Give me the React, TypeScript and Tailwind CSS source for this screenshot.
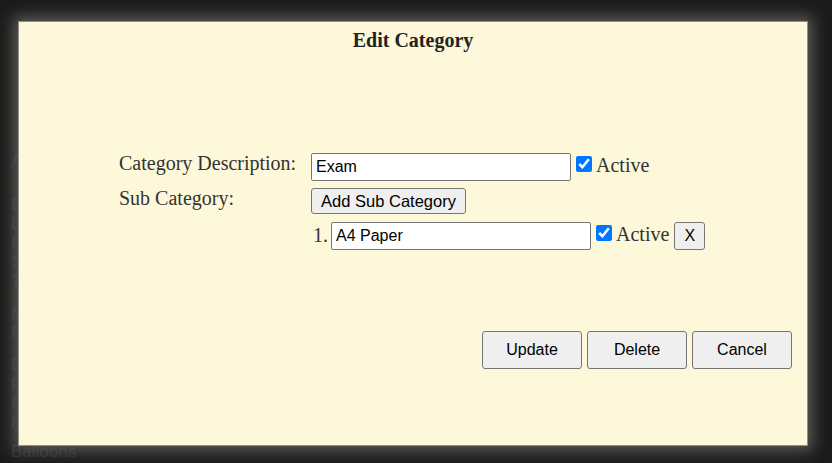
import React from "react";

const bgLines: { t: string; mt: string }[] = [
  { t: "Art Supplies", mt: "mt-0" },
  { t: "Books", mt: "mt-[24px]" },
  { t: "Drawing", mt: "mt-0" },
  { t: "Files", mt: "mt-0" },
  { t: "Stationery", mt: "mt-0" },
  { t: "Toys", mt: "mt-[1px]" },
  { t: "Markers", mt: "mt-[13px]" },
  { t: "Folders", mt: "mt-0" },
  { t: "Decorations", mt: "mt-[13px]" },
  { t: "Flags", mt: "mt-[1px]" },
  { t: "Frames", mt: "mt-0" },
  { t: "Hats", mt: "mt-0" },
  { t: "Balloons", mt: "mt-[10px]" },
];

const serif = "font-['Liberation_Serif','Times_New_Roman',serif]";
const btn = "bg-[#efefef] border border-[#767676] rounded-[3px] text-black";
const input =
  "w-[260px] h-[28px] bg-white border border-[#767676] rounded-[2px] px-[4px] text-[16px] text-black outline-none";
const check = "m-0 ml-[5px] mt-[3px] w-[16px] h-[16px] accent-[#0075ff]";
const text20 = `${serif} text-[20px] leading-[21px] text-[#333]`;

export default function App() {
  return (
    <div className="relative w-[832px] h-[463px] overflow-hidden bg-[#1b1b1a] font-['Liberation_Sans',Arial,sans-serif]">
      {/* background page content (behind the overlay) */}
      <div className="flex flex-col pl-[11px] pt-[152px] text-[17px] text-[#2f2f2e]">
        {bgLines.map((l, i) => (
          <div key={i} className={`h-[19px] leading-[19px] ${l.mt}`}>
            {l.t}
          </div>
        ))}
      </div>

      {/* modal */}
      <div className="absolute left-[18px] top-[21px] w-[790px] h-[425px] border border-[#8f8f8a] bg-[#fcf8d9] shadow-[0_0_14px_5px_rgba(110,110,108,0.75)] flex flex-col">
        <div className={`pt-[7px] text-center text-[20px] leading-[23px] font-bold text-[#222] ${serif}`}>
          Edit Category
        </div>

        <div className="mt-[101px] pl-[100px] flex flex-col">
          {/* row 1 */}
          <div className="flex items-start">
            <div className={`w-[192px] ${text20}`}>Category Description:</div>
            <input defaultValue="Exam" className={input} />
            <input type="checkbox" defaultChecked className={check} />
            <span className={`ml-[4px] mt-[2px] ${text20}`}>Active</span>
          </div>

          {/* row 2 */}
          <div className="flex items-start mt-[7px]">
            <div className={`w-[192px] ${text20}`}>Sub Category:</div>
            <button className={`w-[155px] h-[26px] text-[16.5px] ${btn}`}>Add Sub Category</button>
          </div>

          {/* row 3 */}
          <div className="flex items-start mt-[8px] pl-[192px]">
            <span className={`ml-[2px] mt-[3px] w-[18px] ${text20}`}>1.</span>
            <input defaultValue="A4 Paper" className={input} />
            <input type="checkbox" defaultChecked className={check} />
            <span className={`ml-[4px] mt-[2px] ${text20}`}>Active</span>
            <button className={`ml-[5px] w-[31px] h-[28px] text-[16px] ${btn}`}>X</button>
          </div>
        </div>

        {/* bottom buttons */}
        <div className="mt-[81px] flex justify-end gap-[5px] pr-[15px]">
          {["Update", "Delete", "Cancel"].map((b) => (
            <button key={b} className={`w-[100px] h-[38px] text-[16px] ${btn}`}>
              {b}
            </button>
          ))}
        </div>
      </div>
    </div>
  );
}
